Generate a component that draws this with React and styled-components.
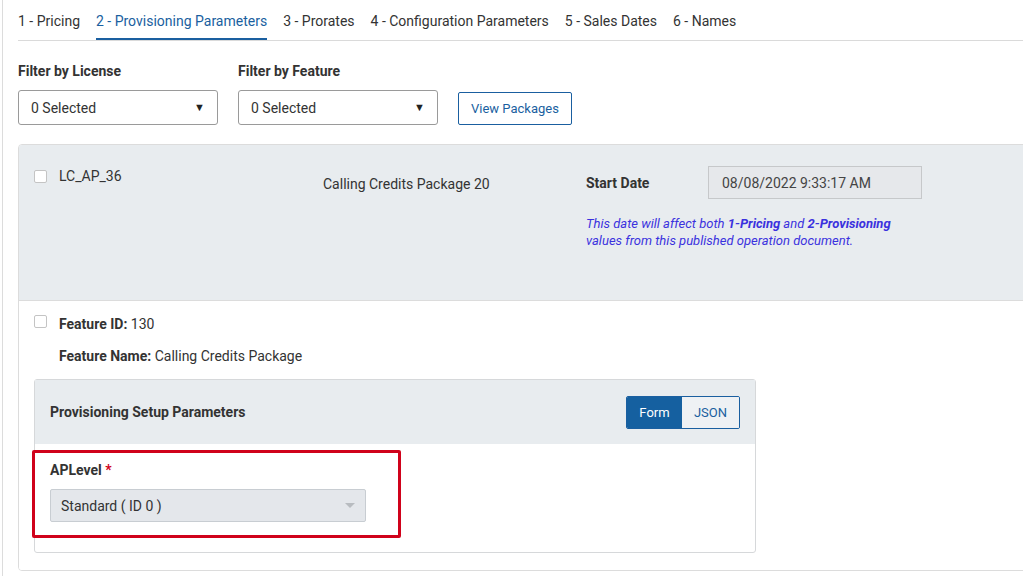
import React from 'react';
import styled, { createGlobalStyle } from 'styled-components';

const GlobalStyle = createGlobalStyle`
  html, body {
    margin: 0;
    padding: 0;
    background: #fff;
    overflow: hidden;
  }
  body {
    font-family: Roboto, "Noto Sans", Arial, sans-serif;
    font-size: 14px;
    color: #333;
  }
`;

const Page = styled.div`
  margin-left: 2px;
  border-left: 1px solid #dcdcdc;
  padding-left: 15px;
  min-height: 576px;
  width: 1030px;
  box-sizing: border-box;
`;

const Tabs = styled.ul`
  display: flex;
  gap: 16px;
  margin: 0;
  padding: 0;
  list-style: none;
  height: 41px;
  border-bottom: 1px solid #dadada;
  box-sizing: border-box;
`;

const Tab = styled.li`
  padding-top: 12px;
  height: 40px;
  box-sizing: border-box;
  line-height: 18px;
  font-size: 14px;
  color: ${(p) => (p.active ? '#1a5fa0' : '#333')};
  border-bottom: 2px solid ${(p) => (p.active ? '#1a5fa0' : 'transparent')};
`;

const Filters = styled.div`
  display: flex;
  align-items: flex-end;
  gap: 20px;
  margin-top: 22px;
`;

const FilterGroup = styled.div`
  display: flex;
  flex-direction: column;
  gap: 11px;
`;

const Label = styled.label`
  font-weight: 700;
  font-size: 14px;
  line-height: 16px;
  color: #333;
`;

const Select = styled.div`
  width: 200px;
  height: 35px;
  box-sizing: border-box;
  border: 1px solid #9a9a9a;
  border-radius: 3px;
  display: flex;
  align-items: center;
  justify-content: space-between;
  padding: 0 12px;
  font-size: 14px;
  color: #333;
`;

const Caret = styled.span`
  font-size: 11px;
  color: #222;
`;

const OutlineButton = styled.button`
  height: 33px;
  padding: 0 12px;
  border: 1px solid #1a5fa0;
  border-radius: 2px;
  background: #fff;
  color: #1a5fa0;
  font-family: inherit;
  font-size: 13px;
`;

const Panel = styled.div`
  margin-top: 19px;
  border: 1px solid #dcdcdc;
  border-radius: 4px;
  overflow: hidden;
`;

const PackageRow = styled.div`
  display: grid;
  grid-template-columns: 289px 263px 1fr;
  background: #e8ecef;
  height: 156px;
  box-sizing: border-box;
  padding: 20px 0 0 15px;
  border-bottom: 1px solid #dcdcdc;
`;

const CheckLine = styled.div`
  display: flex;
  align-items: flex-start;
  gap: 12px;
`;

const Checkbox = styled.span`
  display: inline-block;
  width: 11px;
  height: 11px;
  border: 1px solid #c4c4c4;
  border-radius: 2px;
  background: #fff;
  margin-top: ${(p) => p.offset || 0}px;
  flex-shrink: 0;
`;

const Text = styled.span`
  line-height: 18px;
  padding-top: ${(p) => p.pt || 0}px;
`;

const DateBlock = styled.div`
  display: flex;
  flex-direction: column;
  padding-top: 1px;
`;

const DateLine = styled.div`
  display: flex;
  align-items: center;
`;

const DateLabel = styled.span`
  font-weight: 700;
  width: 122px;
`;

const DateInput = styled.div`
  width: 214px;
  height: 33px;
  box-sizing: border-box;
  border: 1px solid #c6c8ca;
  background: #e6e8eb;
  display: flex;
  align-items: center;
  padding-left: 13px;
  color: #444;
`;

const Note = styled.p`
  margin: 16px 0 0;
  font-style: italic;
  font-size: 13px;
  line-height: 17px;
  color: #3b32de;
  b {
    font-weight: 700;
  }
`;

const FeatureSection = styled.div`
  padding: 14px 0 17px 15px;
  background: #fff;
`;

const FeatureHead = styled.div`
  display: flex;
  gap: 12px;
`;

const FeatureLines = styled.div`
  display: flex;
  flex-direction: column;
  gap: 14px;
`;

const Card = styled.div`
  position: relative;
  margin-top: 14px;
  width: 722px;
  border: 1px solid #d6d8da;
  border-radius: 3px;
  box-sizing: border-box;
`;

const CardHeader = styled.div`
  background: #e8ecef;
  height: 64px;
  display: flex;
  align-items: center;
  justify-content: space-between;
  padding: 0 15px;
  font-weight: 700;
`;

const Toggle = styled.div`
  display: flex;
  border: 1px solid #1a5fa0;
  border-radius: 2px;
  overflow: hidden;
`;

const ToggleBtn = styled.button`
  height: 31px;
  width: ${(p) => p.w}px;
  border: none;
  font-family: inherit;
  font-size: 13px;
  background: ${(p) => (p.active ? '#1560a0' : '#eef1f4')};
  color: ${(p) => (p.active ? '#fff' : '#1a5fa0')};
`;

const CardBody = styled.div`
  padding: 18px 15px 30px;
  display: flex;
  flex-direction: column;
  gap: 11px;
`;

const Required = styled.span`
  color: #d0021b;
`;

const DisabledSelect = styled.div`
  width: 316px;
  height: 33px;
  box-sizing: border-box;
  border: 1px solid #c8cdd2;
  border-radius: 2px;
  background: #e4e7eb;
  display: flex;
  align-items: center;
  justify-content: space-between;
  padding: 0 10px;
  color: #333;
`;

const SmallCaret = styled.span`
  width: 0;
  height: 0;
  border-left: 5px solid transparent;
  border-right: 5px solid transparent;
  border-top: 5px solid #b8bcc0;
`;

const Highlight = styled.div`
  position: absolute;
  left: -3px;
  top: 70px;
  width: 369px;
  height: 88px;
  border: 3px solid #d0021b;
  border-radius: 2px;
  box-sizing: border-box;
  pointer-events: none;
`;

const tabs = [
  '1 - Pricing',
  '2 - Provisioning Parameters',
  '3 - Prorates',
  '4 - Configuration Parameters',
  '5 - Sales Dates',
  '6 - Names',
];

export default function App() {
  return (
    <>
      <GlobalStyle />
      <Page>
        <Tabs>
          {tabs.map((t, i) => (
            <Tab key={t} active={i === 1}>
              {t}
            </Tab>
          ))}
        </Tabs>

        <Filters>
          <FilterGroup>
            <Label>Filter by License</Label>
            <Select>
              0 Selected <Caret>▼</Caret>
            </Select>
          </FilterGroup>
          <FilterGroup>
            <Label>Filter by Feature</Label>
            <Select>
              0 Selected <Caret>▼</Caret>
            </Select>
          </FilterGroup>
          <OutlineButton>View Packages</OutlineButton>
        </Filters>

        <Panel>
          <PackageRow>
            <CheckLine>
              <Checkbox offset={5} />
              <Text pt={2}>LC_AP_36</Text>
            </CheckLine>
            <Text pt={10}>Calling Credits Package 20</Text>
            <DateBlock>
              <DateLine>
                <DateLabel>Start Date</DateLabel>
                <DateInput>08/08/2022 9:33:17 AM</DateInput>
              </DateLine>
              <Note>
                This date will affect both <b>1-Pricing</b> and <b>2-Provisioning</b>
                <br />
                values from this published operation document.
              </Note>
            </DateBlock>
          </PackageRow>

          <FeatureSection>
            <FeatureHead>
              <Checkbox />
              <FeatureLines>
                <Text>
                  <b>Feature ID:</b> 130
                </Text>
                <Text>
                  <b>Feature Name:</b> Calling Credits Package
                </Text>
              </FeatureLines>
            </FeatureHead>

            <Card>
              <CardHeader>
                Provisioning Setup Parameters
                <Toggle>
                  <ToggleBtn active w={55}>
                    Form
                  </ToggleBtn>
                  <ToggleBtn w={57}>JSON</ToggleBtn>
                </Toggle>
              </CardHeader>
              <CardBody>
                <Label>
                  APLevel <Required>*</Required>
                </Label>
                <DisabledSelect>
                  Standard ( ID 0 )
                  <SmallCaret />
                </DisabledSelect>
              </CardBody>
              <Highlight />
            </Card>
          </FeatureSection>
        </Panel>
      </Page>
    </>
  );
}
